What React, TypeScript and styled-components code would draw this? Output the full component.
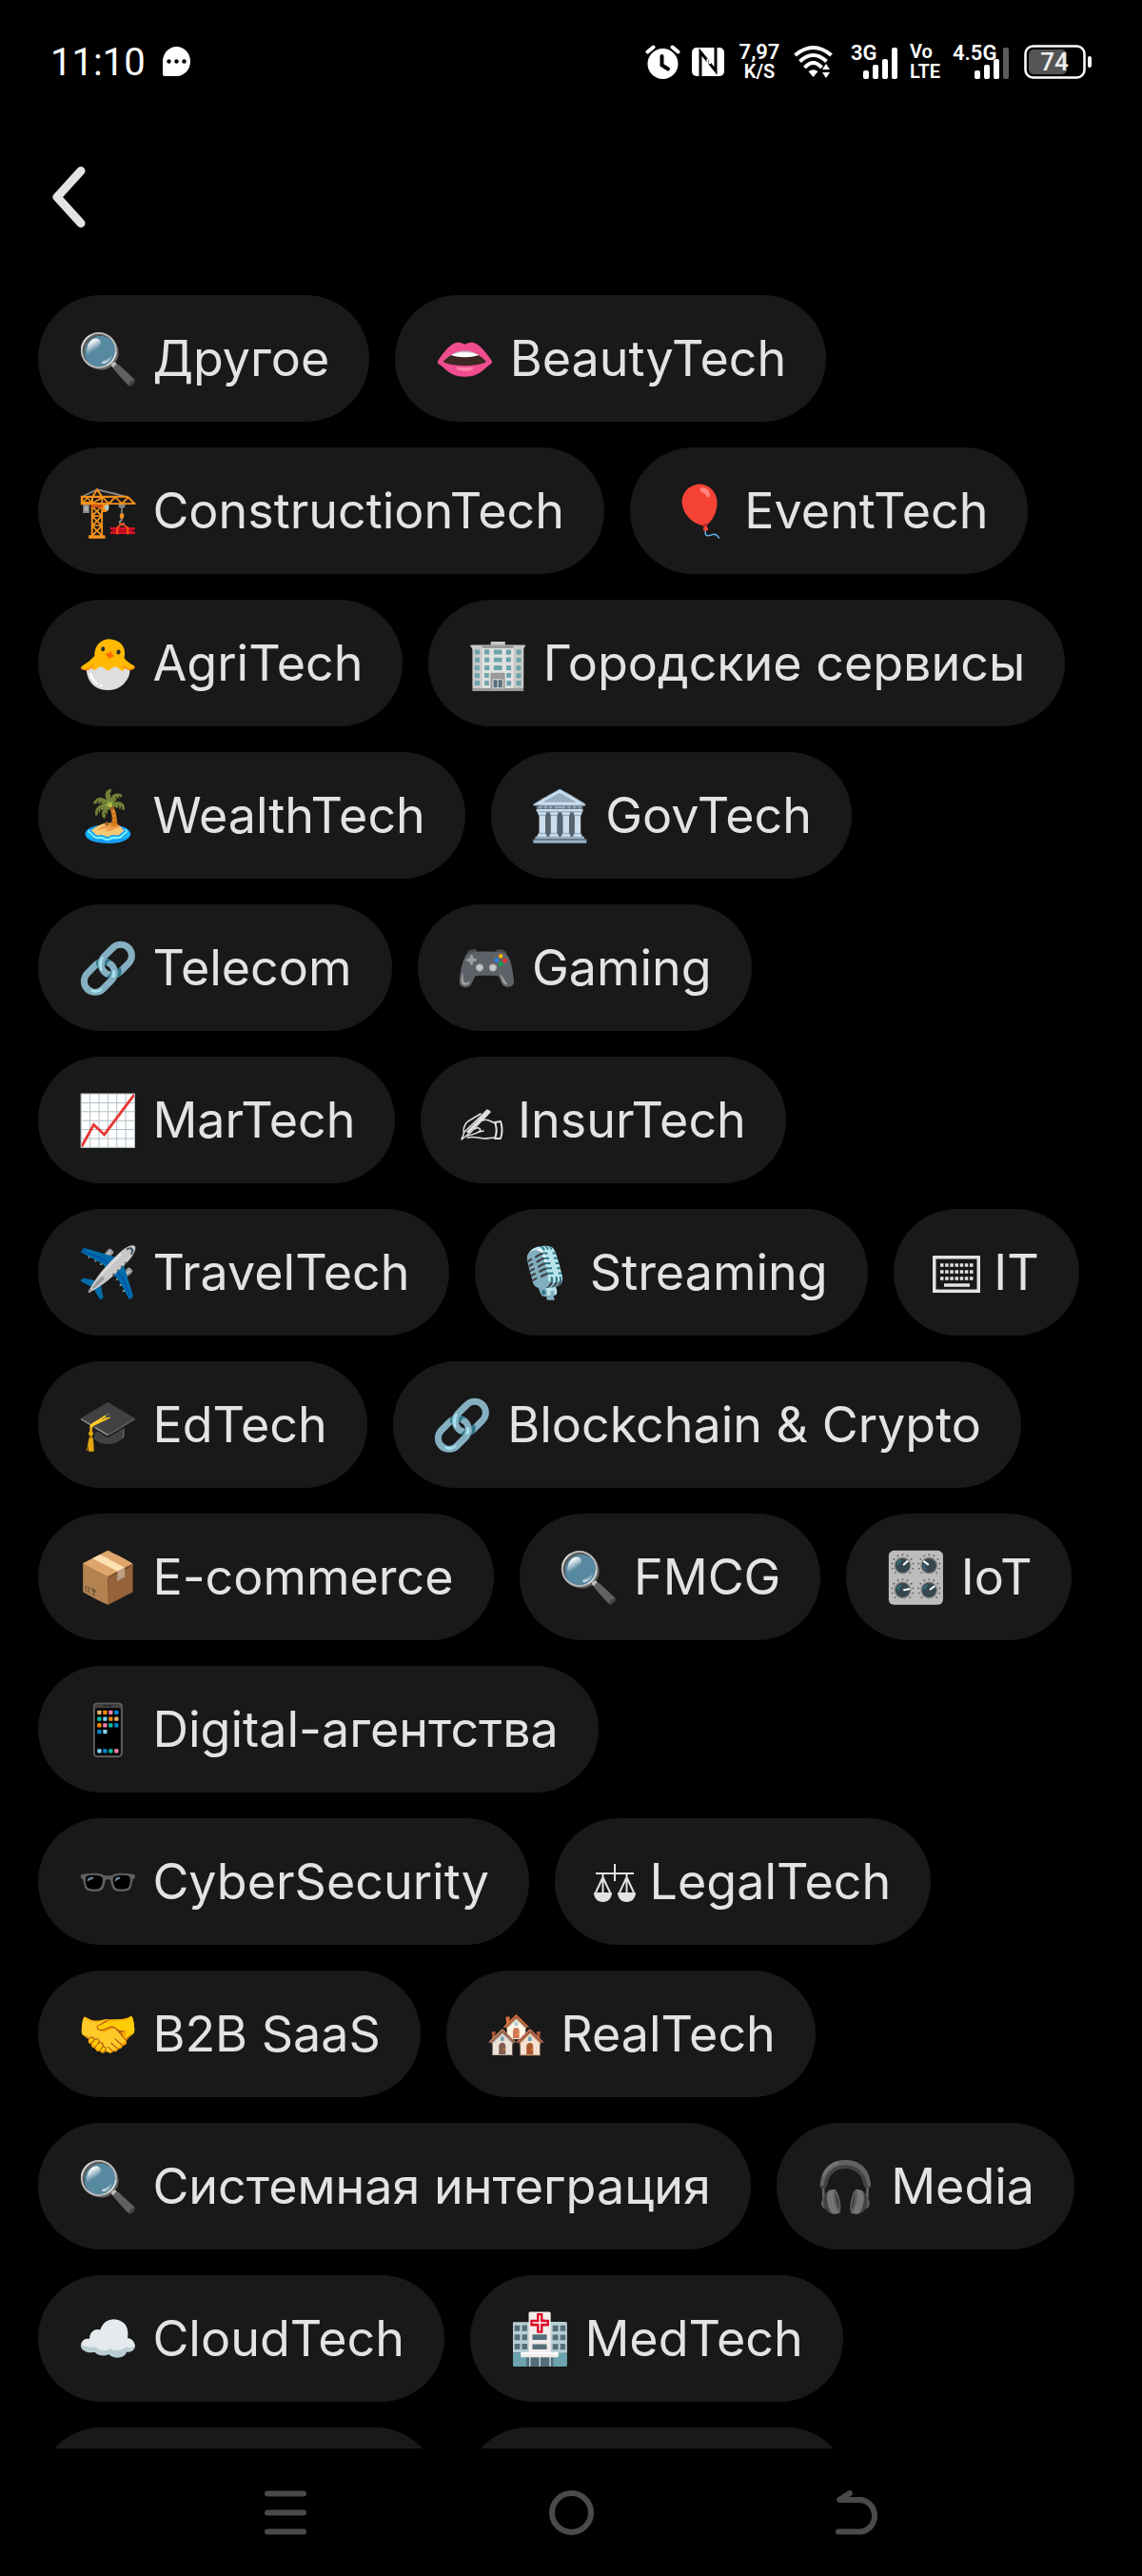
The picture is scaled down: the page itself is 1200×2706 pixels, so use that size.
import { ReactNode } from "react";
import styled, { createGlobalStyle } from "styled-components";

const GlobalStyle = createGlobalStyle`
  * {
    box-sizing: border-box;
  }
  body {
    margin: 0;
    background: #000;
    font-family: Inter, "Noto Color Emoji", sans-serif;
  }
  svg {
    display: block;
    flex: none;
  }
`;

const Screen = styled.div`
  height: 100vh;
  display: flex;
  flex-direction: column;
  background: #000;
  color: #fff;
`;

const StatusBar = styled.div`
  flex: none;
  height: 129px;
  padding: 0 53px;
  display: flex;
  align-items: center;
  justify-content: space-between;
  font-family: Roboto, sans-serif;
`;

const StatusGroup = styled.div<{ $gap: number }>`
  display: flex;
  align-items: center;
  gap: ${({ $gap }) => $gap}px;
`;

const Clock = styled.time`
  padding-top: 2px;
  font-size: 40px;
  line-height: 48px;
`;

const Stack = styled.div<{ $width: number }>`
  width: ${({ $width }) => $width}px;
  display: flex;
  flex-direction: column;
  align-items: center;
  font-size: 20px;
  font-weight: 600;
  line-height: 21px;
  .start {
    align-self: flex-start;
  }
  .large {
    font-size: 22px;
  }
`;

const Signal = styled.div<{ $width: number }>`
  width: ${({ $width }) => $width}px;
  height: 36px;
  display: grid;
  font-size: 22px;
  font-weight: 600;
  line-height: 18px;
  > * {
    grid-area: 1 / 1;
  }
  svg {
    justify-self: end;
    align-self: end;
  }
`;

const Battery = styled.div`
  width: 74px;
  display: grid;
  align-items: center;
  justify-items: end;
  > * {
    grid-area: 1 / 1;
  }
  span {
    width: 71px;
    padding-right: 7px;
    text-align: center;
    font-size: 26px;
    font-weight: 500;
    line-height: 36px;
    color: #eee;
  }
`;

const Header = styled.header`
  flex: none;
  height: 155px;
  padding: 0 40px;
  display: flex;
  align-items: center;
`;

const IconButton = styled.button`
  padding: 12px;
  border: 0;
  background: none;
  display: flex;
  justify-content: center;
`;

const TagArea = styled.main`
  flex: 1;
  min-height: 0;
  overflow: hidden;
`;

const TagList = styled.div`
  padding: 26px 40px;
  display: flex;
  flex-wrap: wrap;
  gap: 27px;
`;

const Tag = styled.button<{ $width?: number }>`
  width: ${({ $width }) => ($width ? `${$width}px` : "auto")};
  height: 133px;
  padding: 0 42px 0 41px;
  border: 0;
  border-radius: 67px;
  background: #191919;
  color: #e3e3e3;
  font: inherit;
  font-size: 52px;
  white-space: nowrap;
  svg {
    display: inline-block;
    vertical-align: -3px;
  }
`;

const NavBar = styled.nav`
  flex: none;
  height: 134px;
  padding: 0 150px;
  display: grid;
  grid-template-columns: repeat(3, 1fr);
  align-items: center;
`;

const AlarmIcon = () => (
  <svg width="37" height="36" viewBox="0 0 37 36" fill="none" strokeLinecap="round">
    <circle cx="18.5" cy="20" r="16" fill="#fff" />
    <path d="M2.5 7.5 8.5 2.5M28.5 2.5l6 5" stroke="#fff" strokeWidth="4" />
    <path d="M17.5 12v9.500l6.500 4" stroke="#000" strokeWidth="4" />
  </svg>
);

const NfcIcon = () => (
  <svg width="35" height="30" viewBox="0 0 35 30">
    <rect width="34" height="30" rx="5" fill="#fff" />
    <path d="M9 30V4.500L25 24.500V0" fill="none" stroke="#000" strokeWidth="3" />
    <path d="M16.500 12v13M19 5v12" fill="none" stroke="#fff" strokeWidth="2" />
  </svg>
);

const WifiIcon = () => (
  <svg width="48" height="36" viewBox="0 0 48 36" fill="none" stroke="#fff" strokeWidth="4">
    <path d="M1.500 11Q20.500-5 39.500 11" />
    <path d="M6.500 17.500Q20.500 4.500 34.500 17.500" />
    <path d="M11.500 24Q20.500 14 29.500 24" />
    <path d="M15.500 28q5-3.500 10 0l-5 6z" fill="#fff" stroke="none" />
    <path d="m34 20 4 6h-8zM34 35l4-6h-8z" fill="#fff" stroke="none" />
  </svg>
);

const Bars = ({ weak }: { weak?: boolean }) => (
  <svg width="37" height="33" viewBox="0 0 37 33" fill="#fff">
    <rect x="0" y="24" width="6" height="9" rx="2" />
    <rect x="10" y="18" width="6" height="15" rx="2" />
    <rect x="20" y="12" width="6" height="21" rx="2" />
    <rect x="30" y="0" width="6" height="33" rx="2" fill={weak ? "#5c5c5c" : "#fff"} />
  </svg>
);

const WritingHand = () => (
  <svg width="46" height="33" viewBox="0 0 46 33" fill="none" stroke="#e3e3e3" strokeWidth="1.500" strokeLinejoin="round" strokeLinecap="round">
    <path d="M29 1l3 2L11 25l-4 3-5 4 3-8z" />
    <path d="M30 2.500 9 24" strokeWidth="3" />
    <path d="M4 24c0-6 3-11 8-13l10-6M24 12c5-3 9 2 14 3M16 21c4-3 8 1 4 3-3 2-7 3-12 4" />
    <path d="M8 30c8-2 13 1 18 1 4 0 7-1 11-1M20 24l5-1" />
    <path d="M37 14l6-1c2 5 2 13 0 18h-6c2-5 2-12 0-17z" strokeWidth="2" />
  </svg>
);

const KeyboardGlyph = () => (
  <svg width="50" height="39" viewBox="0 0 50 39" fill="none" stroke="#e3e3e3" strokeWidth="3.500">
    <rect x="1.750" y="1.750" width="46.500" height="35.500" />
    <path d="M8 10h34.500M8 17h34.500M8 24h34.500" strokeDasharray="3.500 1.667" />
    <path d="M12 31h27" />
  </svg>
);

const ScalesGlyph = () => (
  <svg width="44" height="40" viewBox="0 0 44 40" fill="none" stroke="#e3e3e3" strokeWidth="2">
    <path d="M22 0v18M2 10h40" />
    <path d="M9.500 10v4L2 30M9.500 14 17 30M9.500 14v16M34.500 10v4L27 30M34.500 14 42 30M34.500 14v16" />
    <path d="M0 30h19c0 6-4 10-9.500 10S0 36 0 30zM25 30h19c0 6-4 10-9.500 10S25 36 25 30z" fill="#e3e3e3" stroke="none" />
  </svg>
);

const tags: { icon: ReactNode; name: string }[] = [
  { icon: "🔍", name: "Другое" },
  { icon: "👄", name: "BeautyTech" },
  { icon: "🏗️", name: "ConstructionTech" },
  { icon: "🎈", name: "EventTech" },
  { icon: "🐣", name: "AgriTech" },
  { icon: "🏢", name: "Городские сервисы" },
  { icon: "🏝️", name: "WealthTech" },
  { icon: "🏛️", name: "GovTech" },
  { icon: "🔗", name: "Telecom" },
  { icon: "🎮", name: "Gaming" },
  { icon: "📈", name: "MarTech" },
  { icon: <WritingHand />, name: "InsurTech" },
  { icon: "✈️", name: "TravelTech" },
  { icon: "🎙️", name: "Streaming" },
  { icon: <KeyboardGlyph />, name: "IT" },
  { icon: "🎓", name: "EdTech" },
  { icon: "🔗", name: "Blockchain & Crypto" },
  { icon: "📦", name: "E-commerce" },
  { icon: "🔍", name: "FMCG" },
  { icon: "🎛️", name: "IoT" },
  { icon: "📱", name: "Digital-агентства" },
  { icon: "🕶️", name: "CyberSecurity" },
  { icon: <ScalesGlyph />, name: "LegalTech" },
  { icon: "🤝", name: "B2B SaaS" },
  { icon: "🏘️", name: "RealTech" },
  { icon: "🔍", name: "Системная интеграция" },
  { icon: "🎧", name: "Media" },
  { icon: "☁️", name: "CloudTech" },
  { icon: "🏥", name: "MedTech" },
];

const App = () => {
  return (
    <>
      <GlobalStyle />
      <Screen>
        <StatusBar>
          <StatusGroup $gap={18}>
            <Clock>11:10</Clock>
            <svg width="29" height="31" viewBox="0 0 29 31">
              <path d="M14.500 0C22.500 0 29 7 29 15.500S22.500 31 14.500 31H2a2 2 0 0 1-2-2V15.500C0 7 6.500 0 14.500 0z" fill="#fff" />
              <circle cx="6.500" cy="15.500" r="2.200" />
              <circle cx="14.500" cy="15.500" r="2.200" />
              <circle cx="22.500" cy="15.500" r="2.200" />
            </svg>
          </StatusGroup>
          <StatusGroup $gap={12}>
            <AlarmIcon />
            <NfcIcon />
            <Stack $width={48}>
              <span className="large">7,97</span>
              <span>K/S</span>
            </Stack>
            <WifiIcon />
            <Signal $width={50}>
              <span>3G</span>
              <Bars />
            </Signal>
            <Stack $width={33}>
              <span className="start">Vo</span>
              <span className="start">LTE</span>
            </Stack>
            <Signal $width={60}>
              <span>4.5G</span>
              <Bars weak />
            </Signal>
            <Battery>
              <svg width="71" height="36" viewBox="0 0 71 36">
                <rect x="1.500" y="1.500" width="62" height="33" rx="8" fill="none" stroke="#fff" strokeWidth="2.500" />
                <rect x="5" y="5" width="40" height="26" rx="5" fill="#555" />
                <rect x="67" y="12" width="4" height="12" rx="2" fill="#fff" />
              </svg>
              <span>74</span>
            </Battery>
          </StatusGroup>
        </StatusBar>

        <Header>
          <IconButton aria-label="Назад">
            <svg width="42" height="68" viewBox="0 0 42 68" fill="none" stroke="#e3e3e3" strokeWidth="9" strokeLinecap="round" strokeLinejoin="round">
              <path d="M33 6.500 8 34l25 27.500" />
            </svg>
          </IconButton>
        </Header>

        <TagArea>
          <TagList>
            {tags.map(({ icon, name }) => (
              <Tag key={name}>
                {icon} {name}
              </Tag>
            ))}
            <Tag $width={421} />
            <Tag $width={405} />
          </TagList>
        </TagArea>

        <NavBar>
          <IconButton>
            <svg width="44" height="47" viewBox="0 0 44 47" stroke="#4a4a4a" strokeWidth="6" strokeLinecap="round">
              <path d="M3 3.500h38M3 23.500h38M3 43.500h38" />
            </svg>
          </IconButton>
          <IconButton>
            <svg width="47" height="47" viewBox="0 0 47 47">
              <circle cx="23.500" cy="23.500" r="20.500" fill="none" stroke="#4a4a4a" strokeWidth="6" />
            </svg>
          </IconButton>
          <IconButton>
            <svg width="44" height="47" viewBox="0 0 44 47" fill="none" stroke="#4a4a4a" strokeWidth="6" strokeLinecap="round" strokeLinejoin="round">
              <path d="M15 3 4 10h21a16 16.750 0 0 1 0 33.500H3" />
            </svg>
          </IconButton>
        </NavBar>
      </Screen>
    </>
  );
};

export default App;
